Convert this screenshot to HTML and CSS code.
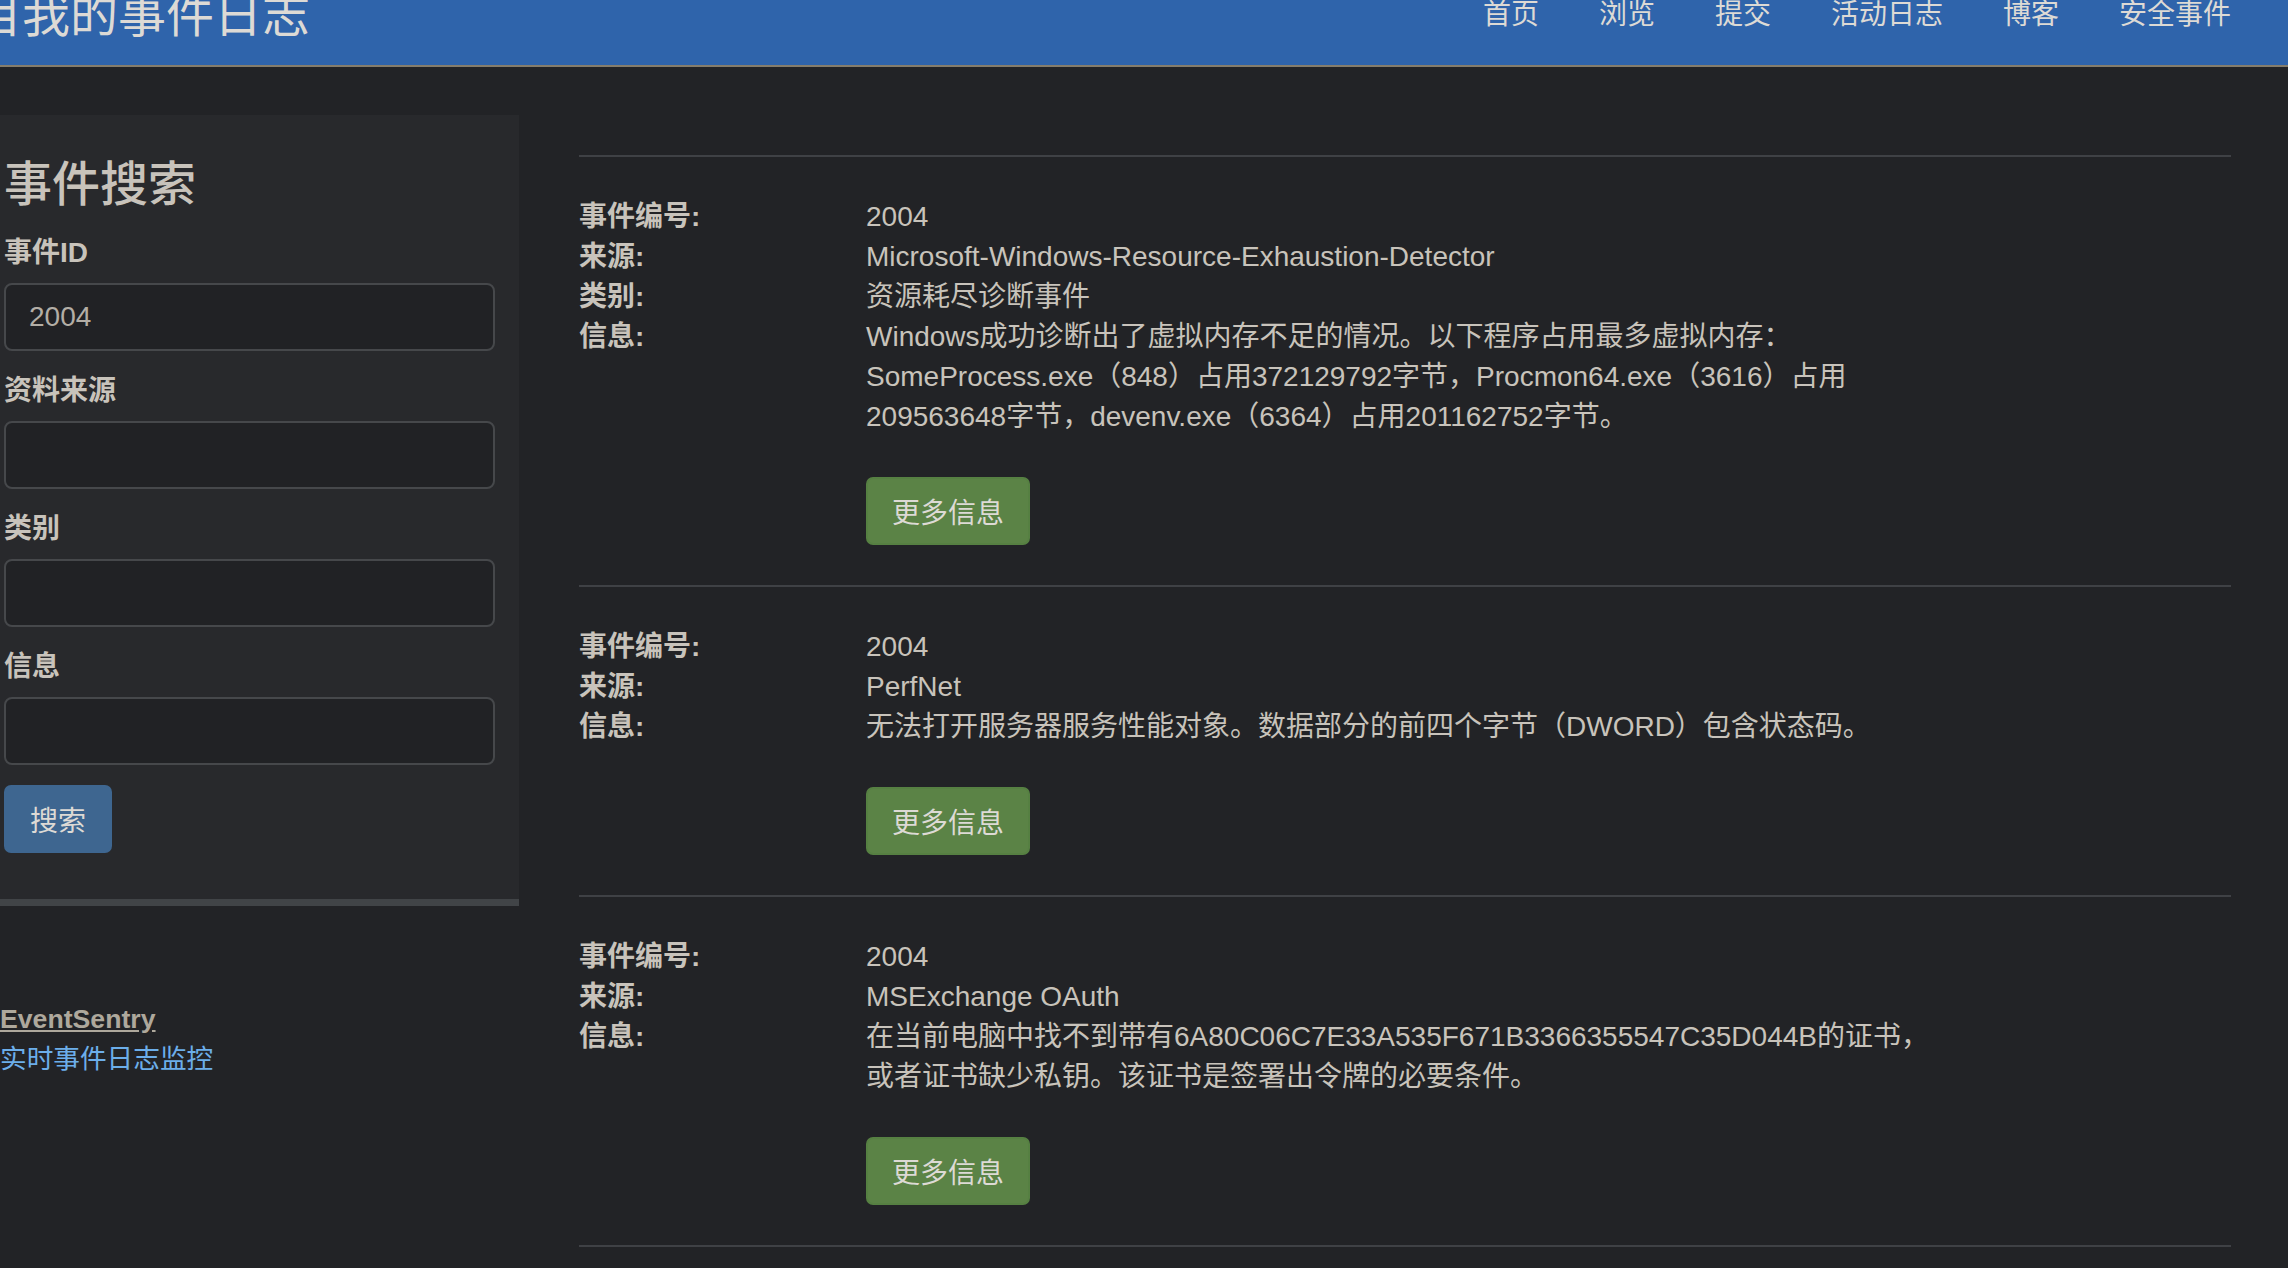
FILE: index.html
```html
<!DOCTYPE html>
<html>
<head>
    <meta charset="UTF-8">
    <link rel="stylesheet" href="styles.css">
</head>
<body>
    <div class="navbar">
        <div class="brand">目我的事件日志</div>
        <div class="nav">
            <a href="#">首页</a>
            <a href="#">浏览</a>
            <a href="#">提交</a>
            <a href="#">活动日志</a>
            <a href="#">博客</a>
            <a href="#">安全事件</a>
        </div>
    </div>

    <div class="layout">
        <div class="sidebar">
            <div class="search-panel">
                <h2 class="search-title">事件搜索</h2>
                <div class="form-group">
                    <label class="form-label">事件ID</label>
                    <input class="form-input" type="text" value="2004">
                </div>
                <div class="form-group">
                    <label class="form-label">资料来源</label>
                    <input class="form-input" type="text">
                </div>
                <div class="form-group">
                    <label class="form-label">类别</label>
                    <input class="form-input" type="text">
                </div>
                <div class="form-group">
                    <label class="form-label">信息</label>
                    <input class="form-input" type="text">
                </div>
                <button class="button button-search">搜索</button>
            </div>

            <div class="promo">
                <a class="promo-title" href="#">EventSentry</a>
                <a class="promo-link" href="#">实时事件日志监控</a>
            </div>
        </div>

        <div class="main">
            <div class="event">
                <div class="event-row">
                    <div class="event-label">事件编号:</div>
                    <div class="event-value">2004</div>
                </div>
                <div class="event-row">
                    <div class="event-label">来源:</div>
                    <div class="event-value">Microsoft-Windows-Resource-Exhaustion-Detector</div>
                </div>
                <div class="event-row">
                    <div class="event-label">类别:</div>
                    <div class="event-value">资源耗尽诊断事件</div>
                </div>
                <div class="event-row">
                    <div class="event-label">信息:</div>
                    <div class="event-value">Windows成功诊断出了虚拟内存不足的情况。以下程序占用最多虚拟内存：SomeProcess.exe（848）占用372129792字节，Procmon64.exe（3616）占用209563648字节，devenv.exe（6364）占用201162752字节。</div>
                </div>
                <div class="event-actions">
                    <button class="button button-more">更多信息</button>
                </div>
            </div>

            <div class="event">
                <div class="event-row">
                    <div class="event-label">事件编号:</div>
                    <div class="event-value">2004</div>
                </div>
                <div class="event-row">
                    <div class="event-label">来源:</div>
                    <div class="event-value">PerfNet</div>
                </div>
                <div class="event-row">
                    <div class="event-label">信息:</div>
                    <div class="event-value">无法打开服务器服务性能对象。数据部分的前四个字节（DWORD）包含状态码。</div>
                </div>
                <div class="event-actions">
                    <button class="button button-more">更多信息</button>
                </div>
            </div>

            <div class="event">
                <div class="event-row">
                    <div class="event-label">事件编号:</div>
                    <div class="event-value">2004</div>
                </div>
                <div class="event-row">
                    <div class="event-label">来源:</div>
                    <div class="event-value">MSExchange OAuth</div>
                </div>
                <div class="event-row">
                    <div class="event-label">信息:</div>
                    <div class="event-value">在当前电脑中找不到带有6A80C06C7E33A535F671B3366355547C35D044B的证书，或者证书缺少私钥。该证书是签署出令牌的必要条件。</div>
                </div>
                <div class="event-actions">
                    <button class="button button-more">更多信息</button>
                </div>
            </div>
        </div>
    </div>
</body>
</html>
```

FILE: styles.css
```css
body {
    margin: 0;
    background: #222326;
    color: #c8c3bb;
    font-family: "Liberation Sans", "Noto Sans CJK SC", sans-serif;
    font-size: 28px;
    line-height: 40px;
    overflow: hidden;
}

a {
    text-decoration: none;
}

.navbar {
    height: 65px;
    background: #2f64ab;
    border-bottom: 2px solid #857d6c;
    display: flex;
    justify-content: space-between;
    align-items: flex-start;
    padding-right: 57px;
    overflow: hidden;
}

.brand {
    font-size: 48px;
    line-height: 48px;
    margin-left: -26px;
    margin-top: -8px;
    color: #dddad5;
    white-space: nowrap;
}

.nav {
    display: flex;
    gap: 60px;
    font-size: 28px;
    line-height: 28px;
    margin-top: 1px;
}

.nav a {
    color: #dddad5;
}

.layout {
    display: flex;
    gap: 60px;
    margin-top: 48px;
    padding-right: 57px;
}

.sidebar {
    width: 519px;
    flex: none;
}

.search-panel {
    background: #28292c;
    padding: 42px 24px 46px 4px;
    border-bottom: 7px solid #414447;
}

.search-title {
    margin: 0 0 20px 0;
    font-size: 48px;
    line-height: 56px;
    font-weight: 500;
    color: #c8c3bb;
}

.form-group {
    margin-bottom: 20px;
}

.form-label {
    display: block;
    font-weight: bold;
    margin-bottom: 10px;
    color: #c8c3bb;
}

.form-input {
    display: block;
    width: 100%;
    box-sizing: border-box;
    height: 68px;
    padding: 0 23px;
    border: 2px solid #46484b;
    border-radius: 8px;
    background: #212225;
    color: #b3aea6;
    font-family: inherit;
    font-size: 28px;
}

.button {
    height: 68px;
    border: none;
    border-radius: 7px;
    font-family: inherit;
    font-size: 28px;
    color: #dddad5;
    cursor: pointer;
}

.button-search {
    width: 108px;
    background: #3e6690;
}

.button-more {
    padding: 0 24px;
    background: #5b8346;
    border: 2px solid #568042;
}

.promo {
    margin-top: 93px;
    display: flex;
    flex-direction: column;
    align-items: flex-start;
    font-size: 26.67px;
}

.promo-title {
    font-weight: bold;
    color: #aea89c;
    text-decoration: underline;
}

.promo-link {
    color: #6caeea;
}

.main {
    flex: 1;
    padding-top: 40px;
}

.event {
    border-top: 2px solid #3f4145;
    padding: 40px 0;
}

.event:last-child {
    border-bottom: 2px solid #3f4145;
}

.event-row {
    display: flex;
}

.event-label {
    width: 287px;
    flex: none;
    font-weight: bold;
}

.event-value {
    max-width: 1065px;
}

.event-actions {
    margin-top: 40px;
    padding-left: 287px;
}
```
